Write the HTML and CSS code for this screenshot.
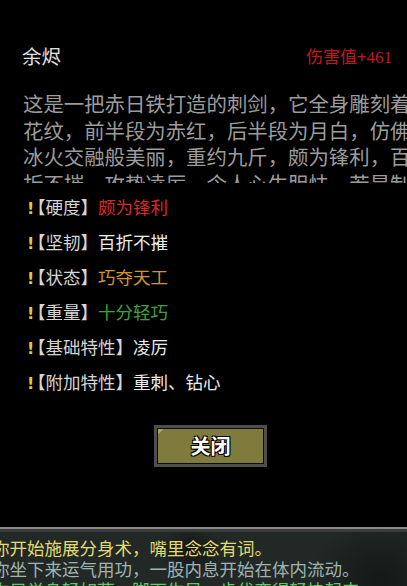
FILE: index.html
```html
<!DOCTYPE html>
<html lang="zh-CN">
<head>
  <meta charset="UTF-8">
  <title>余烬</title>
  <link rel="stylesheet" href="styles.css">
</head>
<body>

  <div class="item-panel">
    <div class="item-head">
      <span class="item-name">余烬</span>
      <span class="item-damage">伤害值<b>+</b>461</span>
    </div>

    <div class="item-desc">这是一把赤日铁打造的刺剑，它全身雕刻着花纹，前半段为赤红，后半段为月白，仿佛冰火交融般美丽，重约九斤，颇为锋利，百折不摧，攻势凌厉，令人心生胆怯，若是制敌于先，必能克敌制胜。</div>

    <ul class="stats">
      <li><b class="mark">!</b><span class="label">【硬度】</span><span class="val red">颇为锋利</span></li>
      <li><b class="mark">!</b><span class="label">【坚韧】</span><span class="val">百折不摧</span></li>
      <li><b class="mark">!</b><span class="label">【状态】</span><span class="val orange">巧夺天工</span></li>
      <li><b class="mark">!</b><span class="label">【重量】</span><span class="val green">十分轻巧</span></li>
      <li><b class="mark">!</b><span class="label">【基础特性】</span><span class="val">凌厉</span></li>
      <li><b class="mark">!</b><span class="label">【附加特性】</span><span class="val">重刺、钻心</span></li>
    </ul>

    <div class="actions">
      <button class="close-btn"><span>关闭</span></button>
    </div>
  </div>

  <div class="log">
    <p class="yellow">你开始施展分身术，嘴里念念有词。</p>
    <p class="grey">你坐下来运气用功，一股内息开始在体内流动。</p>
    <p class="lime">你只觉身轻如燕，脚下生风，步伐变得轻快起来。</p>
  </div>

</body>
</html>
```

FILE: styles.css
```css
body {
  margin: 0;
  height: 586px;
  background-color: #000;
  overflow: hidden;
  font-family: "Noto Sans CJK SC", sans-serif;
}
.item-panel {
  width: 421px;
  padding-top: 43px;
}
.item-head {
  display: flex;
  justify-content: space-between;
  align-items: center;
  height: 24px;
  padding: 0 29px 0 22px;
}
.item-name {
  font-size: 19.5px;
  color: #e2e2e2;
}
.item-damage {
  font-family: "Liberation Serif", serif;
  font-size: 17px;
  color: #c4161c;
}
.item-desc {
  margin: 23px 0 0 23px;
  width: 395px;
  height: 93px;
  overflow: hidden;
  font-size: 20.4px;
  line-height: 26.7px;
  color: #9c9c9c;
}
.stats {
  list-style: none;
  margin: 5.5px 0 0;
  padding: 0 0 0 27px;
}
.stats li {
  height: 35.2px;
  line-height: 35.2px;
  font-size: 17.5px;
  white-space: nowrap;
}
.mark {
  display: inline-block;
  width: 1px;
  color: #d6d23e;
  font-family: "DejaVu Sans", sans-serif;
  font-size: 16px;
}
.label {
  color: #d6d6d6;
}
.val {
  color: #ececec;
}
.val.red {
  color: #d8282a;
}
.val.orange {
  color: #d4952c;
}
.val.green {
  color: #3ea33e;
}
.actions {
  display: flex;
  justify-content: center;
  margin-top: 25px;
}
.close-btn {
  width: 113px;
  height: 42px;
  box-sizing: border-box;
  border: 3px solid #4e4e4e;
  padding: 1px;
  background: #0a0a0a;
  font-family: inherit;
  cursor: pointer;
}
.close-btn span {
  display: flex;
  height: 100%;
  align-items: center;
  justify-content: center;
  background: linear-gradient(135deg, #a8a36a 0 4px, #7f7b3d 4px);
  color: #fff;
  font-size: 20px;
  font-weight: bold;
  text-shadow: -1px -1px 0 #000, 1px -1px 0 #000, -1px 1px 0 #000, 1px 1px 0 #000;
}
.log {
  margin-top: 60px;
  width: 421px;
  height: 60px;
  box-sizing: border-box;
  border-top: 2px solid #8a8a8a;
  padding-top: 8.5px;
  box-shadow: inset 0 3px 0 #3b3b3b;
  background:
    radial-gradient(ellipse 30px 26px at 190px 22px, #121615 0, rgba(18, 22, 21, 0) 100%),
    radial-gradient(ellipse 70px 60px at 380px 50px, #141817 0, rgba(20, 24, 23, 0) 100%),
    #222826;
  font-size: 17.5px;
  line-height: 21px;
}
.log p {
  margin: 0 0 0 -8px;
  white-space: nowrap;
}
.log .yellow {
  color: #e0dc70;
}
.log .grey {
  color: #9fb4b0;
}
.log .lime {
  color: #5ecb5e;
}
```
